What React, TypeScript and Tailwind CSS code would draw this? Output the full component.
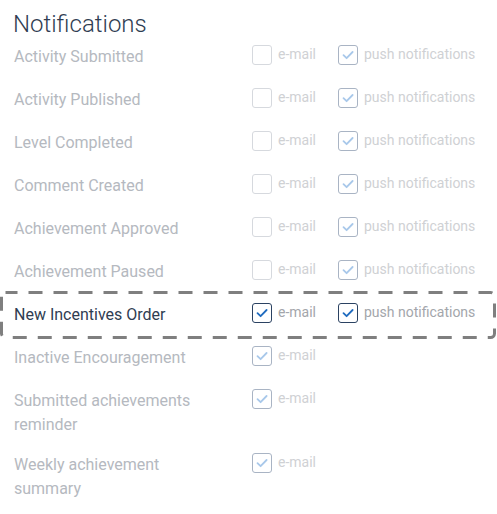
import React from "react";

type Row = {
  label: string;
  email: boolean;
  push?: boolean;
  active?: boolean;
};

const rows: Row[] = [
  { label: "Activity Submitted", email: false, push: true },
  { label: "Activity Published", email: false, push: true },
  { label: "Level Completed", email: false, push: true },
  { label: "Comment Created", email: false, push: true },
  { label: "Achievement Approved", email: false, push: true },
  { label: "Achievement Paused", email: false, push: true },
  { label: "New Incentives Order", email: true, push: true, active: true },
  { label: "Inactive Encouragement", email: true },
  { label: "Submitted achievements reminder", email: true },
  { label: "Weekly achievement summary", email: true },
];

function Box({ checked, active }: { checked: boolean; active?: boolean }) {
  const border = active
    ? "border-[#2b4262]"
    : checked
      ? "border-[#a9b4c4]"
      : "border-[#d6d9de]";
  return (
    <span
      className={`flex h-5 w-5 shrink-0 items-center justify-center rounded-[3px] border bg-white ${border}`}
    >
      {checked && (
        <svg width="14" height="14" viewBox="0 0 14 14" fill="none">
          <path
            d="M2.5 7.2 L5.6 10.2 L11.6 4"
            stroke={active ? "#1f6bbf" : "#a8c8ea"}
            strokeWidth="1.8"
            strokeLinecap="round"
            strokeLinejoin="round"
          />
        </svg>
      )}
    </span>
  );
}

function Option({
  checked,
  label,
  active,
}: {
  checked: boolean;
  label: string;
  active?: boolean;
}) {
  return (
    <label className="flex items-start gap-[6px]">
      <Box checked={checked} active={active} />
      <span
        className={`text-[14px] leading-[19px] ${active ? "text-[#a3a6ab]" : "text-[#cfd1d4]"}`}
      >
        {label}
      </span>
    </label>
  );
}

// dashed highlight drawn as svg so the dash length matches
function Highlight() {
  return (
    <svg
      className="pointer-events-none absolute -top-3 left-0"
      width="496"
      height="48"
      viewBox="0 0 496 48"
      fill="none"
    >
      <rect
        x="1.5"
        y="1.5"
        width="493"
        height="45"
        rx="4"
        stroke="#7f7f7f"
        strokeWidth="3"
        strokeDasharray="14 11"
        strokeDashoffset="2"
      />
    </svg>
  );
}

export default function App() {
  return (
    <div
      className="min-h-screen bg-white pt-2"
      style={{ fontFamily: "Roboto, 'Liberation Sans', sans-serif" }}
    >
      <h2 className="mb-[5px] pl-[13px] text-[24px] font-light leading-8 text-[#2f3d52]">
        Notifications
      </h2>
      <div className="flex flex-col gap-4">
        {rows.map((r) => (
          <div key={r.label} className="relative flex min-h-[27px] items-start">
            {r.active && <Highlight />}
            <div className="w-[252px] shrink-0 pl-[14px] pr-[48px]">
              <span
                className={`block text-[16px] leading-6 ${r.active ? "text-[#2f3d52]" : "text-[#b5b9c0]"}`}
              >
                {r.label}
              </span>
            </div>
            <div className="flex items-start">
              <div className="w-[86px]">
                <Option checked={r.email} label="e-mail" active={r.active} />
              </div>
              {r.push !== undefined && (
                <Option checked={r.push} label="push notifications" active={r.active} />
              )}
            </div>
          </div>
        ))}
      </div>
    </div>
  );
}
